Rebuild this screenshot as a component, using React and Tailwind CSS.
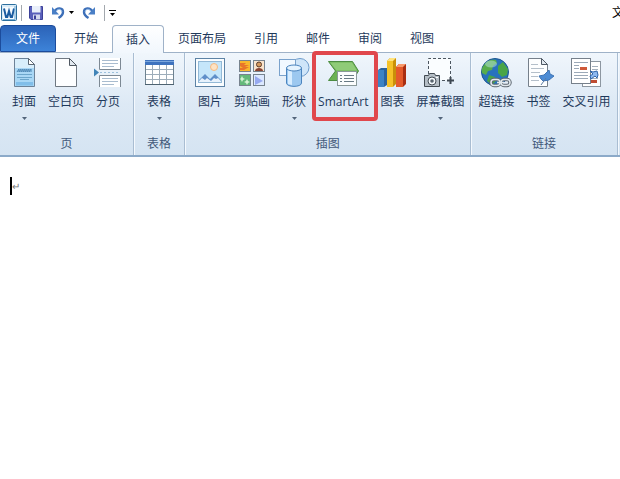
import { clsx } from "clsx";

function WordLogo() {
  return (
    <svg width="17" height="18" viewBox="0 0 17 18" aria-hidden="true" className="ml-px">
      <rect x="0.5" y="0.5" width="15" height="16" rx="1" fill="#d9ebf7" stroke="#2c6f9e" />
      <rect x="2" y="3" width="11" height="12" fill="#f7fcff" />
      <path d="M3 4.500 5 13h1.300L8 7l1.700 6H11l2-8.500" fill="none" stroke="#1c5ca0" strokeWidth="2" />
      <path d="M14 2v13.500H2" fill="none" stroke="#7bb2d8" />
    </svg>
  );
}

function SaveIcon() {
  return (
    <svg width="15" height="15" viewBox="0 0 15 15" aria-hidden="true">
      <path d="M.5 1.500h13v13H2l-1.500-1.500z" fill="#5a60bb" stroke="#3d4199" />
      <rect x="3" y="1" width="8.500" height="6.500" fill="#e9effa" />
      <rect x="4" y="9.500" width="7" height="5" fill="#d5d9ee" />
      <rect x="5" y="10.500" width="2" height="3.500" fill="#3b3f98" />
    </svg>
  );
}

function UndoIcon({ flip }) {
  return (
    <svg width="14" height="15" viewBox="0 0 14 15" aria-hidden="true" className={clsx(flip && "-scale-x-100")}>
      <path d="M3.500 6.500C6 2 12 2.500 12 7c0 3-2 4.500-4.500 6" fill="none" stroke="#3d6fb8" strokeWidth="2.400" />
      <path d="M1 2v7.500h7z" fill="#4a7fc6" />
      <path d="M5.500 5.500c2-2 5-1.500 5.400 1.500" fill="none" stroke="#9cc2ec" />
    </svg>
  );
}

function Caret({ className }) {
  return (
    <svg width="5" height="3" viewBox="0 0 5 3" aria-hidden="true" className={className}>
      <path d="M0 0h5L2.500 3z" fill="currentColor" />
    </svg>
  );
}

function Icon({ children }) {
  return (
    <svg width="32" height="32" viewBox="0 0 32 32" aria-hidden="true" className="shrink-0">
      {children}
    </svg>
  );
}

function CoverIcon() {
  return (
    <Icon>
      <path d="M6.500 1.500h14l6 6v22h-20z" fill="#a9d7f5" stroke="#6c8298" />
      <path d="M7 2h13v6h6v3H7z" fill="#d8eefb" />
      <path d="M20.500 1.500v6h6z" fill="#fff" stroke="#5c6874" />
      <path d="M9 15l2-3v3l2-3v3l2-3v3l2-3v3l2-3v3l2-3v3l2-3v3" fill="none" stroke="#4d86b4" />
      <path d="M9 17.500h15M9 20.500h15M12 22.500h9" stroke="#6ca6cc" />
      <path d="M8 25h17v3.500H8z" fill="#81bee9" />
    </Icon>
  );
}

function BlankIcon() {
  return (
    <Icon>
      <path d="M5.500 1.500h14l7 7v21h-21z" fill="#fdfeff" stroke="#6f7882" />
      <path d="M19.500 1.500v7h7z" fill="#e2e9f0" stroke="#4f5862" />
    </Icon>
  );
}

function BreakIcon() {
  return (
    <Icon>
      <path d="M7 1h21v12H7zM7 18h21v12H7z" fill="#fff" />
      <path d="M7.500 1v11.500h21V1M7.500 30V18.500h21V30" fill="none" stroke="#7d8994" />
      <path d="M10 3.500h16M10 6.500h16M10 9.500h12M10 21.500h16M10 24.500h16M10 27.500h12" stroke="#a9bccf" />
      <path d="M2 11.500v8l5-4z" fill="#4184b8" />
      <path d="M8 15.500h20" stroke="#9cc0dc" strokeDasharray="2 2" />
    </Icon>
  );
}

function TableIcon() {
  return (
    <Icon>
      <path d="M2.500 3.500h28v24h-28z" fill="#fff" stroke="#6e8290" />
      <path d="M2 3h29v5H2z" fill="#3f73be" />
      <path d="M2 4.500h29" stroke="#7ba6dc" />
      <path d="M3 12.500h27M3 17.500h27M3 22.500h27M9.500 8v19M16.500 8v19M23.500 8v19" stroke="#9dadba" />
      <path d="M2 27.500h29" stroke="#4d6270" />
    </Icon>
  );
}

function PictureIcon() {
  return (
    <Icon>
      <rect x="1.500" y="1.500" width="29" height="28" fill="#fafdff" stroke="#5d83a5" />
      <rect x="4.500" y="4.500" width="23" height="21" fill="#c5e6fa" stroke="#93b9d6" />
      <circle cx="20" cy="10" r="3.500" fill="#fde3c4" stroke="#f5b981" />
      <path d="M5 23l6-6 5 5 5-5 6 6v2H5z" fill="#5f8fc9" />
      <path d="M5 25v-1l3-3 3 2 2-2 4 3 3-3 2 1 2-1 3 3v1z" fill="#e7f2fc" />
    </Icon>
  );
}

function ClipArtIcon() {
  return (
    <Icon>
      <rect x="3.500" y="3.500" width="11" height="11" fill="#f8b72c" stroke="#77838e" />
      <path d="M4 6h6l-2 2h5l-4 2h4l-5 3H4v-2h3l-3-2z" fill="#e8742a" />
      <rect x="17.500" y="3.500" width="11" height="11" fill="#fae4cc" stroke="#77838e" />
      <circle cx="23" cy="7.500" r="2.500" fill="#d79b60" stroke="#5b3b29" />
      <path d="M19 14c0-4 8-4 8 0z" fill="#8a4432" />
      <rect x="3.500" y="17.500" width="11" height="11" fill="#64b97a" stroke="#77838e" />
      <path d="M6 19l1 2 2 1-2 1-1 2-1-2-1-1 1-1zM11 22l1 2 2 1-2 1-1 2-1-2-2-1 2-1z" fill="#d2f3d2" />
      <rect x="17.500" y="17.500" width="11" height="11" fill="#dce9ff" stroke="#77838e" />
      <path d="M19 19l8 5-8 4z" fill="#97a9f0" />
    </Icon>
  );
}

function ShapesIcon() {
  return (
    <Icon>
      <circle cx="22" cy="10.500" r="9" fill="#cfe5f9" stroke="#6d9bcb" />
      <rect x="1.500" y="2.500" width="16" height="16" fill="#f1f8ff" stroke="#7aa2cc" />
      <path d="M8.500 11v15c0 4.500 15 4.500 15 0V11z" fill="#9cc8f0" stroke="#4c85bf" />
      <path d="M10 13v14l4 1V13z" fill="#d8edff" />
      <ellipse cx="16" cy="11" rx="7.500" ry="3" fill="#e5f3ff" stroke="#4c85bf" />
    </Icon>
  );
}

function SmartArtIcon() {
  return (
    <Icon>
      <path d="M1.500 4.500h24l6 9.500-6 9.500h-24l7-9.500z" fill="#6cb254" stroke="#4c8c41" />
      <path d="M3 5.500h22l5 8H9.500z" fill="#8fcb78" />
      <rect x="10.500" y="14.500" width="19" height="14" fill="#fbfdfd" stroke="#8a9999" />
      <path d="M13 18.500h2M17 18.500h10M13 21.500h2M17 21.500h10M13 24.500h2M17 24.500h10" stroke="#687a84" />
    </Icon>
  );
}

function ChartIcon() {
  return (
    <Icon>
      <path d="M2 13l3-2h6v17l-3 2H2z" fill="#2b639f" />
      <path d="M2 13h6v17H2z" fill="#3c83c5" />
      <path d="M11 4l3-3h6v26l-3 3h-6z" fill="#c99009" />
      <path d="M11 4h6v26h-6z" fill="#f5c229" />
      <path d="M11 4l3-3h6l-3 3z" fill="#ffe37e" />
      <path d="M20 10l3-3h7v20l-3 3h-7z" fill="#a92e12" />
      <path d="M20 10h7v20h-7z" fill="#e45a2b" />
      <path d="M20 10l3-3h7l-3 3z" fill="#f89a6b" />
    </Icon>
  );
}

function ScreenshotIcon() {
  return (
    <Icon>
      <path d="M4.500 17V1.500h22v22H18" fill="#fafdff" stroke="#4c5660" strokeDasharray="3 2" />
      <path d="M23 23.500h7M26.500 20v7" stroke="#3d4751" strokeWidth="2" />
      <path d="M.5 18.500h4l1-2h5l1 2h4v11H.5z" fill="#b5bec6" stroke="#414a52" />
      <circle cx="8" cy="24" r="4" fill="#f4f9fc" stroke="#434c55" />
      <circle cx="8" cy="24" r="1.800" fill="#59646e" />
      <path d="M12 20.500h2" stroke="#fff" />
    </Icon>
  );
}

function LinkIcon() {
  return (
    <Icon>
      <circle cx="15" cy="15" r="13.500" fill="#2872bd" stroke="#1b5590" />
      <path d="M4 8c3-5 8-6 12-5l1 3-4 3-1 4-4 1-2 4-4-2c-1-3 0-6 2-8z" fill="#58ad4c" />
      <path d="M18 9l5-4 5 7-1 6-5 2-4-4zM9 18l6 2 1 4-4 4-5-4z" fill="#49a547" />
      <ellipse cx="11" cy="7" rx="6" ry="3.500" fill="#b8e3df" opacity=".5" />
      <g fill="none" stroke="#5c666f" strokeWidth="3.500">
        <rect x="11" y="22.500" width="9" height="6" rx="3" />
        <rect x="21" y="22.500" width="9" height="6" rx="3" />
      </g>
      <g fill="none" stroke="#e1e8ed" strokeWidth="1.500">
        <rect x="11" y="22.500" width="9" height="6" rx="3" />
        <rect x="21" y="22.500" width="9" height="6" rx="3" />
        <path d="M17 25.500h7" />
      </g>
    </Icon>
  );
}

function BookmarkIcon() {
  return (
    <Icon>
      <path d="M6.500 1.500h13l6 6v22h-19z" fill="#fdfeff" stroke="#76808b" />
      <path d="M19.500 1.500v6h6z" fill="#e1e8ef" stroke="#4f5964" />
      <path d="M9 7.500h7M9 11.500h13M9 15.500h9M9 19.500h7M9 23.500h8" stroke="#b4bfca" />
      <path d="M17 19l5-1 5-5 1 4 4 2-5 4-6 1-2-2z" fill="#4c8bd4" stroke="#3f74b5" />
      <path d="M24 21l-5 7" stroke="#5c7da5" />
    </Icon>
  );
}

function CrossRefIcon() {
  return (
    <Icon>
      <rect x="12.500" y="4.500" width="18" height="25" fill="#fff" stroke="#8d97a1" />
      <path d="M22 9.500h6M22 12.500h6M22 21.500h6" stroke="#a4b0bd" />
      <path d="M20 23h7v3h-7z" fill="#bf4c32" />
      <rect x="1.500" y="1.500" width="19" height="25" fill="#fff" stroke="#76808b" />
      <path d="M4 5.500h14M4 8.500h5M4 11.500h5M4 15.500h14M4 18.500h14M4 21.500h14" stroke="#9ba9b8" />
      <path d="M10 10h7v3h-7z" fill="#ce593a" />
      <path d="M20 14l3 1 4-1 1 4-1 3-2-2-4 3-1-3 3-2z" fill="#8fbaf0" stroke="#2f65a9" />
    </Icon>
  );
}

const tabs = ["开始", "插入", "页面布局", "引用", "邮件", "审阅", "视图"];

const groups = [
  {
    name: "页",
    className: "pl-1.5 pr-[7px]",
    items: [
      { label: "封面", icon: CoverIcon, menu: true },
      { label: "空白页", icon: BlankIcon },
      { label: "分页", icon: BreakIcon },
    ],
  },
  {
    name: "表格",
    className: "px-[7px]",
    items: [{ label: "表格", icon: TableIcon, menu: true }],
  },
  {
    name: "插图",
    className: "pl-[7px]",
    items: [
      { label: "图片", icon: PictureIcon },
      { label: "剪贴画", icon: ClipArtIcon },
      { label: "形状", icon: ShapesIcon, menu: true },
      { label: "SmartArt", icon: SmartArtIcon, marked: true },
      { label: "图表", icon: ChartIcon },
      { label: "屏幕截图", icon: ScreenshotIcon, menu: true },
    ],
  },
  {
    name: "链接",
    className: "pl-px",
    items: [
      { label: "超链接", icon: LinkIcon },
      { label: "书签", icon: BookmarkIcon },
      { label: "交叉引用", icon: CrossRefIcon },
    ],
  },
];

function RibbonButton({ label, icon: Glyph, menu, marked }) {
  return (
    <button type="button" className="relative flex flex-col items-center px-1.5 pt-1 whitespace-nowrap">
      <span className="flex w-6 justify-center">
        <Glyph />
      </span>
      <span className="mt-[5px] leading-4">{label}</span>
      {menu && <Caret className="mt-[7px] text-[#52647a]" />}
      {marked && <span className="absolute -top-0.5 -right-1 left-0 z-10 h-[70px] rounded-sm border-4 border-[#e0474c]" />}
    </button>
  );
}

function RibbonGroup({ name, items, className }) {
  return (
    <section aria-label={name} className="flex flex-col border-r border-[#a9bdd2] shadow-[1px_0_0_#f4f9fe]">
      <div className={clsx("flex h-[81px] items-start", className)}>
        {items.map((item) => (
          <RibbonButton key={item.label} {...item} />
        ))}
      </div>
      <div className="text-center leading-5 text-[#43597a]">{name}</div>
    </section>
  );
}

export default function App() {
  return (
    <div className="overflow-hidden bg-white font-['Open_Sans','Noto_Sans_CJK_SC',sans-serif] text-xs text-[#1e395b]">
      <header className="flex h-[25px] items-center">
        <WordLogo />
        <span className="ml-[3px] h-4 w-px bg-[#a3a8ae]" />
        <button type="button" aria-label="保存" className="ml-[7px]">
          <SaveIcon />
        </button>
        <button type="button" aria-label="撤消" className="ml-[7px]">
          <UndoIcon />
        </button>
        <button type="button" aria-label="撤消选项" className="ml-1">
          <Caret className="text-black" />
        </button>
        <button type="button" aria-label="恢复" className="ml-2">
          <UndoIcon flip />
        </button>
        <span className="ml-2 h-4 w-px bg-[#a3a8ae]" />
        <button type="button" aria-label="自定义快速访问工具栏" className="ml-1 flex flex-col items-center gap-0.5 text-black">
          <span className="h-px w-[7px] bg-black" />
          <Caret />
        </button>
        <span className="-mr-1 ml-auto text-black">文</span>
      </header>

      <nav className="flex h-7 items-stretch border-b border-[#9fb2c8]">
        <button type="button" className="mr-1 w-14 rounded-t-sm border border-[#1c4c9c] bg-linear-to-b from-[#2c63b8] to-[#3d83d8] text-white">
          文件
        </button>
        {tabs.map((tab) => (
          <button
            key={tab}
            type="button"
            className={clsx(
              "whitespace-nowrap",
              tab === "插入"
                ? "z-10 -mb-px rounded-t-sm border border-b-0 border-[#9fb2c8] bg-linear-to-b from-white to-[#f1f7fd] px-[13px]"
                : "px-3.5"
            )}
          >
            {tab}
          </button>
        ))}
      </nav>

      <div className="flex h-[104px] border-b-2 border-[#8caac9] bg-linear-to-b from-[#f0f6fc] via-[#dde9f5] to-[#d5e4f2]">
        {groups.map((group) => (
          <RibbonGroup key={group.name} {...group} />
        ))}
      </div>

      <main className="flex items-center px-2.5 pt-5">
        <span className="h-[18px] w-0.5 bg-black" />
        <span className="text-[10px] leading-4 text-[#777]">↵</span>
      </main>
    </div>
  );
}
